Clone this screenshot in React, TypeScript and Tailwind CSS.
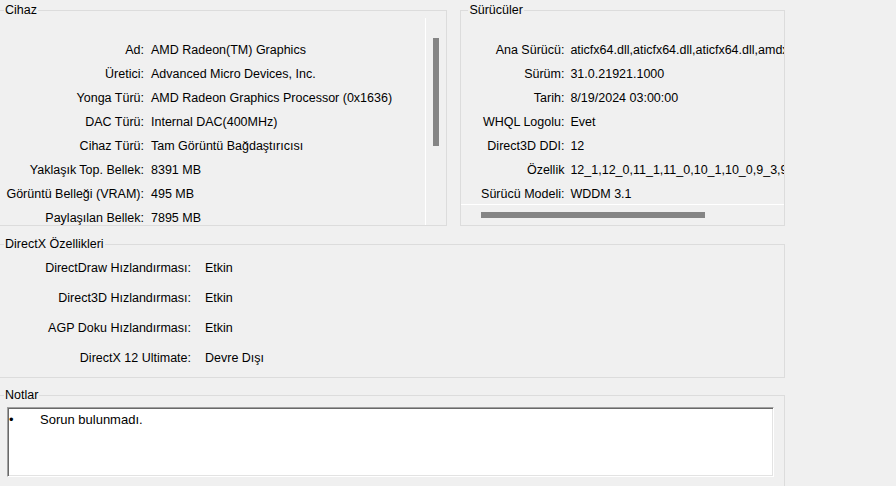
const deviceRows: [string, string][] = [
  ["Ad:", "AMD Radeon(TM) Graphics"],
  ["Üretici:", "Advanced Micro Devices, Inc."],
  ["Yonga Türü:", "AMD Radeon Graphics Processor (0x1636)"],
  ["DAC Türü:", "Internal DAC(400MHz)"],
  ["Cihaz Türü:", "Tam Görüntü Bağdaştırıcısı"],
  ["Yaklaşık Top. Bellek:", "8391 MB"],
  ["Görüntü Belleği (VRAM):", "495 MB"],
  ["Paylaşılan Bellek:", "7895 MB"],
];

const driverRows: [string, string][] = [
  ["Ana Sürücü:", "aticfx64.dll,aticfx64.dll,aticfx64.dll,amdxc64.dll"],
  ["Sürüm:", "31.0.21921.1000"],
  ["Tarih:", "8/19/2024 03:00:00"],
  ["WHQL Logolu:", "Evet"],
  ["Direct3D DDI:", "12"],
  ["Özellik", "12_1,12_0,11_1,11_0,10_1,10_0,9_3,9_2,9_1"],
  ["Sürücü Modeli:", "WDDM 3.1"],
];

const featureRows: [string, string][] = [
  ["DirectDraw Hızlandırması:", "Etkin"],
  ["Direct3D Hızlandırması:", "Etkin"],
  ["AGP Doku Hızlandırması:", "Etkin"],
  ["DirectX 12 Ultimate:", "Devre Dışı"],
];

function Legend({ children }: { children: string }) {
  return <legend className="ml-[7px] px-px leading-[15px]">{children}</legend>;
}

export default function App() {
  return (
    <div className="h-[486px] w-[896px] overflow-hidden bg-[#f0f0f0] font-['Liberation_Sans',Arial,sans-serif] text-[12.5px] text-black">
      <div className="-ml-[4px] flex w-[789px] flex-col pt-[3px]">
        <div className="flex gap-[13px]">
          {/* Cihaz */}
          <fieldset className="m-0 w-[452px] min-w-0 border border-[#dcdcdc] p-0">
            <Legend>Cihaz</Legend>
            <div className="flex h-[207px]">
              <div className="h-full w-[430px] overflow-hidden border-r border-white pt-[20px]">
                {deviceRows.map(([label, value]) => (
                  <div key={label} className="flex h-[24px] items-center whitespace-nowrap leading-[24px]">
                    <span className="w-[147px] shrink-0 text-right">{label}</span>
                    <span className="ml-[7px]">{value}</span>
                  </div>
                ))}
              </div>
              <div className="w-[20px] shrink-0 pl-[7px] pt-[20px]">
                <div className="h-[108px] w-[6px] bg-[#858585]" />
              </div>
            </div>
          </fieldset>

          {/* Sürücüler */}
          <fieldset className="m-0 w-[325px] min-w-0 border border-[#dcdcdc] p-0">
            <Legend>Sürücüler</Legend>
            <div className="h-[187px] overflow-hidden border-b border-white pt-[20px]">
              {driverRows.map(([label, value]) => (
                <div key={label} className="flex h-[24px] items-center whitespace-nowrap leading-[24px]">
                  <span className="w-[103px] shrink-0 text-right">{label}</span>
                  <span className="ml-[6px]">{value}</span>
                </div>
              ))}
            </div>
            <div className="h-[20px] pl-[20px] pt-[7px]">
              <div className="h-[6px] w-[224px] bg-[#858585]" />
            </div>
          </fieldset>
        </div>

        {/* DirectX Özellikleri */}
        <fieldset className="m-0 mt-[11px] min-w-0 border border-[#dcdcdc] p-0 pb-[4px] pt-px">
          <Legend>DirectX Özellikleri</Legend>
          {featureRows.map(([label, value]) => (
            <div key={label} className="flex h-[30px] items-center whitespace-nowrap leading-[30px]">
              <span className="w-[194px] shrink-0 text-right">{label}</span>
              <span className="ml-[14px]">{value}</span>
            </div>
          ))}
        </fieldset>

        {/* Notlar */}
        <fieldset className="m-0 mt-[10px] min-w-0 border border-[#dcdcdc] p-0 pb-[30px]">
          <Legend>Notlar</Legend>
          <div className="ml-[10px] mt-[4px] h-[70px] w-[767px] border border-b-white border-l-[#a0a0a0] border-r-white border-t-[#a0a0a0] bg-white shadow-[inset_1px_1px_0_#696969,inset_-1px_-1px_0_#e3e3e3]">
            <div className="flex pl-[1px] pt-[4px] text-[13px] leading-[15px]">
              <span className="w-[31px] shrink-0">•</span>
              <span>Sorun bulunmadı.</span>
            </div>
          </div>
        </fieldset>
      </div>
    </div>
  );
}
